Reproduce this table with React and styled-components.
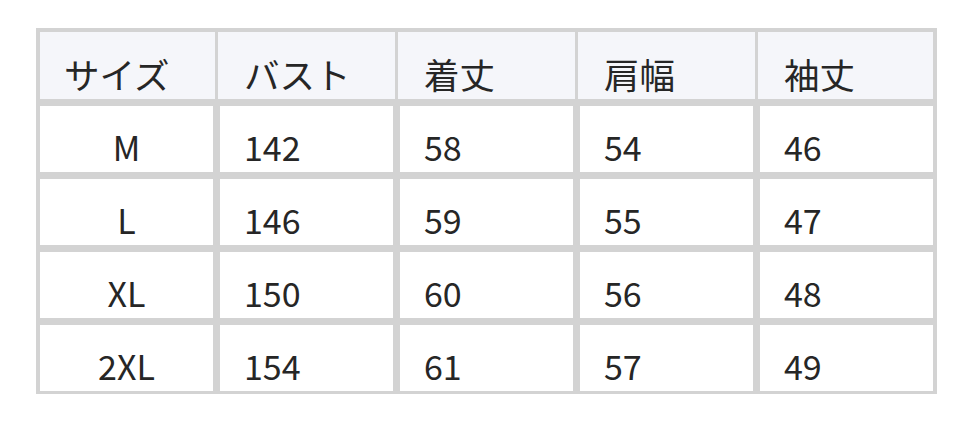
import React from 'react'
import styled, { createGlobalStyle } from 'styled-components'

const GlobalStyle = createGlobalStyle`
  body {
    margin: 0;
    background: #ffffff;
    font-family: "Noto Sans CJK JP", "Noto Sans", sans-serif;
  }
`

const Page = styled.div`
  width: 972px;
  height: 422px;
  padding: 28px 0 0 36px;
  box-sizing: border-box;
`

const Table = styled.div`
  display: grid;
  grid-template-columns: repeat(5, 173px);
  grid-auto-rows: 66px;
  grid-template-rows: 67px;
  column-gap: 7px;
  row-gap: 7px;
  width: max-content;
  padding: 4px 4px 3px 4px;
  background: #d3d3d3;
`

const Header = styled.div`
  display: flex;
  align-items: flex-end;
  margin: 0 ${p => (p.$last ? 0 : -2)}px 0 ${p => (p.$first ? 0 : -2)}px;
  padding: 0 0 8px ${p => (p.$first ? 24 : 26)}px;
  background: #f5f6fa;
  color: #262626;
  font-size: 35.5px;
  line-height: 35px;
`

const Cell = styled.div`
  display: flex;
  align-items: flex-end;
  justify-content: ${p => (p.$center ? 'center' : 'flex-start')};
  padding: 0 0 8px ${p => (p.$center ? 0 : 24)}px;
  background: #ffffff;
  color: #262626;
  font-size: 34px;
  line-height: 34px;
`

const headers = ['サイズ', 'バスト', '着丈', '肩幅', '袖丈']

const rows = [
  ['M', '142', '58', '54', '46'],
  ['L', '146', '59', '55', '47'],
  ['XL', '150', '60', '56', '48'],
  ['2XL', '154', '61', '57', '49']
]

export default function App () {
  return (
    <Page>
      <GlobalStyle />
      <Table>
        {headers.map((h, i) => (
          <Header key={h} $first={i === 0} $last={i === headers.length - 1}>{h}</Header>
        ))}
        {rows.map(row =>
          row.map((value, i) => (
            <Cell key={row[0] + i} $center={i === 0}>{value}</Cell>
          ))
        )}
      </Table>
    </Page>
  )
}
